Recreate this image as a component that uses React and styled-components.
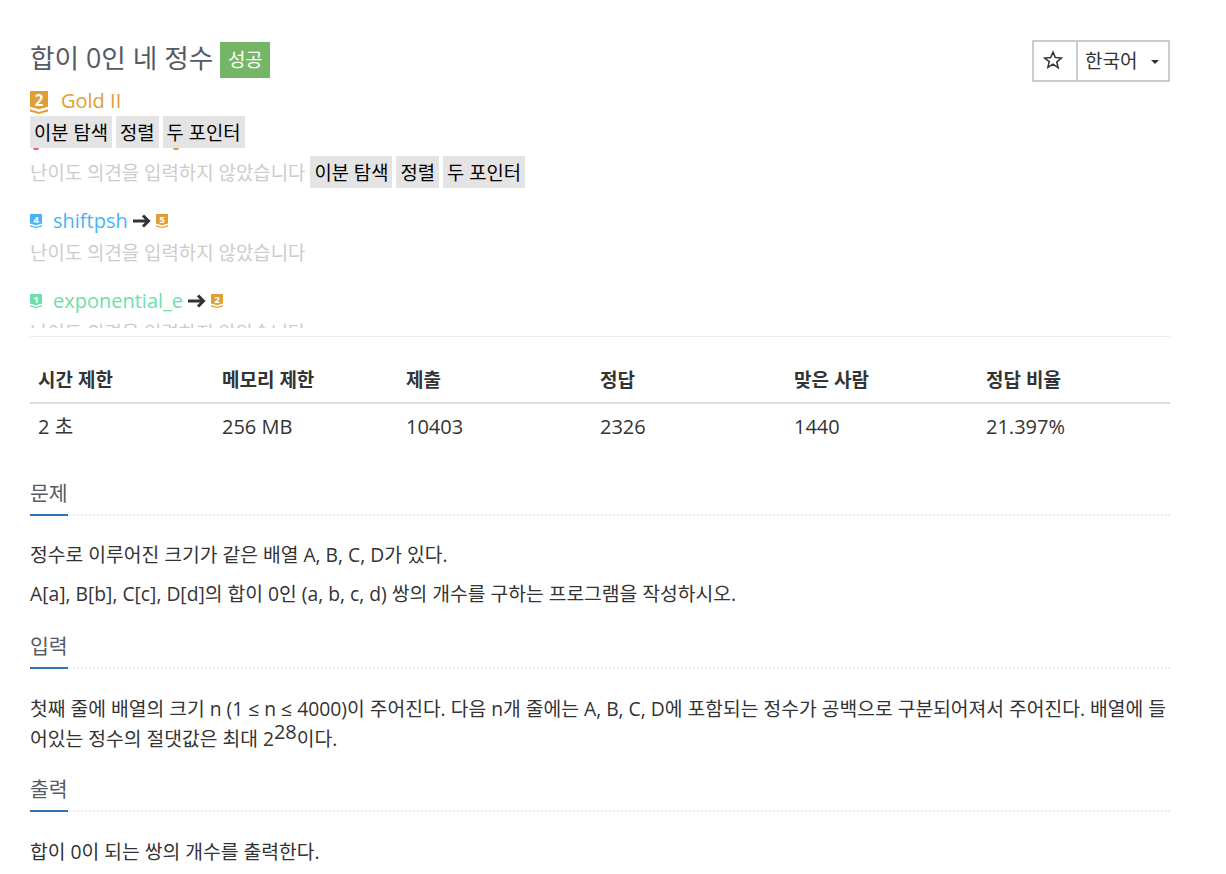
import React from 'react';
import styled, { createGlobalStyle } from 'styled-components';

const GlobalStyle = createGlobalStyle`
  html, body {
    margin: 0;
    padding: 0;
    background: #fff;
    font-family: 'Open Sans', 'Noto Sans CJK KR', sans-serif;
    color: #333;
  }
`;

const GOLD = '#e09e37';
const SKY = '#48b4f5';
const MINT = '#6ddfa8';

const Page = styled.div`
  width: 1140px;
  padding: 40px 0 0 30px;
`;

const TitleRow = styled.div`
  display: flex;
  justify-content: space-between;
  align-items: flex-start;
  height: 42px;
`;

const Title = styled.h1`
  display: flex;
  align-items: center;
  gap: 7px;
  margin: 2px 0 0;
  font-size: 26.7px;
  line-height: 36px;
  font-weight: 400;
  color: #555b66;
`;

const TitleText = styled.span`
  margin-top: -5px;
`;

const Success = styled.span`
  width: 50px;
  height: 36px;
  display: flex;
  align-items: center;
  justify-content: center;
  background: #74b566;
  color: #fff;
  font-size: 19px;
`;

const Controls = styled.div`
  display: flex;
  height: 42px;
  border: 2px solid #ccc;
  box-sizing: border-box;
`;

const StarButton = styled.div`
  width: 44px;
  display: flex;
  align-items: center;
  justify-content: center;
  padding: 0 4px 2px 0;
  border-right: 2px solid #ccc;
  box-sizing: border-box;
`;

const LangButton = styled.div`
  width: 90px;
  display: flex;
  align-items: center;
  justify-content: space-between;
  padding: 0 9px 3px 7px;
  box-sizing: border-box;
  font-size: 19px;
  color: #333;
`;

const Caret = styled.span`
  width: 0;
  height: 0;
  margin-top: 4px;
  border-left: 4px solid transparent;
  border-right: 4px solid transparent;
  border-top: 4px solid #333;
`;

const TierLine = styled.div`
  display: flex;
  align-items: center;
  height: 28px;
  margin-top: 6px;
  gap: 13px;
  font-size: 20px;
  color: ${props => props.$color};
`;

const TierName = styled.span`
  margin-top: -3px;
`;

const Tags = styled.div`
  display: inline-flex;
  gap: 4px;
`;

const Tag = styled.span`
  height: 32px;
  display: flex;
  align-items: center;
  padding: 0 4px;
  background: #e4e4e4;
  color: #000;
  font-size: 18.8px;
  white-space: nowrap;
`;

const Peek = styled.div`
  display: flex;
  height: 2px;
  overflow: hidden;
  padding-left: 3px;
  gap: 134px;
`;

const PeekDot = styled.span`
  width: 6px;
  height: 2px;
  border-radius: 0 0 3px 3px;
  background: ${props => props.$color};
`;

const Opinions = styled.div`
  height: 189px;
  border-bottom: 1px solid #eee;
  box-sizing: border-box;
`;

const OpinionsClip = styled.div`
  height: 180px;
  overflow: hidden;
`;

const Muted = styled.div`
  display: flex;
  align-items: center;
  gap: 5px;
  height: 32px;
  margin-top: ${props => props.$top}px;
  font-size: 18.9px;
  color: #ccc;
  white-space: nowrap;
`;

const Reviewer = styled.div`
  display: flex;
  align-items: center;
  height: 28px;
  margin-top: 19px;
  font-size: 20px;
  color: ${props => props.$color};
`;

const ReviewerName = styled.span`
  margin: -2px 0 0 11px;
`;

const ArrowWrap = styled.span`
  display: flex;
  margin: 0 5px;
`;

const InfoTable = styled.div`
  display: grid;
  grid-template-columns: 184px 184px 194px 194px 192px 192px;
  margin-top: 26px;
`;

const HeadCell = styled.div`
  height: 37px;
  padding: 2px 8px 0;
  border-bottom: 2px solid #ddd;
  font-size: 19px;
  font-weight: 700;
  line-height: 30px;
  color: #333;
`;

const BodyCell = styled.div`
  padding: 8px 8px 0;
  height: 44px;
  font-size: 20px;
  line-height: 30px;
  color: #333;
`;

const Section = styled.section`
  margin-top: ${props => props.$top}px;
`;

const Headline = styled.div`
  border-bottom: 2px dotted #eee;
  height: 34px;
`;

const HeadlineText = styled.h2`
  display: inline-block;
  margin: 0;
  height: 34px;
  border-bottom: 2px solid #2f74b5;
  font-size: 20.5px;
  line-height: 26px;
  font-weight: 400;
  color: #555b66;
`;

const Text = styled.p`
  margin: ${props => props.$top}px 0 0;
  font-size: 19.3px;
  line-height: 30px;
  color: #333;
`;

const Sup = styled.sup`
  font-size: 20px;
  line-height: 0;
`;

function TierBadge({ color, n, width = 12, height = 14 }) {
  return (
    <svg width={width} height={height} viewBox="0 0 18 22" preserveAspectRatio="none" style={{ flex: 'none' }}>
      <path d="M0 0H18V15L9 17.5L0 15Z" fill={color} />
      <path d="M0 17.5L9 20L18 17.5V19.5L9 22L0 19.5Z" fill={color} />
      <text x="9" y="14" textAnchor="middle" fontSize="15" fontWeight="700" fill="#fff" fontFamily="'Open Sans', sans-serif">{n}</text>
    </svg>
  );
}

function Arrow() {
  return (
    <svg width="18" height="14" viewBox="0 0 18 14">
      <path d="M0 7H15M10 1.5L15.5 7L10 12.5" stroke="#333" strokeWidth="3" fill="none" />
    </svg>
  );
}

const tagNames = ['이분 탐색', '정렬', '두 포인터'];

function TagList() {
  return (
    <Tags>
      {tagNames.map(t => <Tag key={t}>{t}</Tag>)}
    </Tags>
  );
}

const columns = [
  ['시간 제한', '2 초'],
  ['메모리 제한', '256 MB'],
  ['제출', '10403'],
  ['정답', '2326'],
  ['맞은 사람', '1440'],
  ['정답 비율', '21.397%'],
];

export default function App() {
  return (
    <Page>
      <GlobalStyle />
      <TitleRow>
        <Title><TitleText>합이 0인 네 정수</TitleText> <Success>성공</Success></Title>
        <Controls>
          <StarButton>
            <svg width="20" height="20" viewBox="0 0 24 24">
              <path d="M12 2.5l2.8 6.6 7.2.6-5.5 4.7 1.7 7L12 17l-6.2 3.9 1.7-7L2 9.7l7.2-.6z" fill="none" stroke="#333" strokeWidth="1.8" />
            </svg>
          </StarButton>
          <LangButton>한국어 <Caret /></LangButton>
        </Controls>
      </TitleRow>

      <TierLine $color={GOLD}>
        <TierBadge color={GOLD} n="2" width={18} height={23} />
        <TierName>Gold II</TierName>
      </TierLine>
      <TagList />

      <Opinions>
        <OpinionsClip>
          <Peek>
            <PeekDot $color="#f0559a" />
            <PeekDot $color={GOLD} />
          </Peek>
          <Muted $top={6}>난이도 의견을 입력하지 않았습니다 <TagList /></Muted>
          <Reviewer $color={SKY}>
            <TierBadge color={SKY} n="4" />
            <ReviewerName>shiftpsh</ReviewerName>
            <ArrowWrap><Arrow /></ArrowWrap>
            <TierBadge color={GOLD} n="5" />
          </Reviewer>
          <Muted $top={1}>난이도 의견을 입력하지 않았습니다</Muted>
          <Reviewer $color={MINT}>
            <TierBadge color={MINT} n="1" />
            <ReviewerName>exponential_e</ReviewerName>
            <ArrowWrap><Arrow /></ArrowWrap>
            <TierBadge color={GOLD} n="2" />
          </Reviewer>
          <Muted $top={1}>난이도 의견을 입력하지 않았습니다</Muted>
        </OpinionsClip>
      </Opinions>

      <InfoTable>
        {columns.map(c => <HeadCell key={c[0]}>{c[0]}</HeadCell>)}
        {columns.map(c => <BodyCell key={c[0]}>{c[1]}</BodyCell>)}
      </InfoTable>

      <Section $top={24}>
        <Headline><HeadlineText>문제</HeadlineText></Headline>
        <Text $top={24}>정수로 이루어진 크기가 같은 배열 A, B, C, D가 있다.</Text>
        <Text $top={9}>A[a], B[b], C[c], D[d]의 합이 0인 (a, b, c, d) 쌍의 개수를 구하는 프로그램을 작성하시오.</Text>
      </Section>

      <Section $top={24}>
        <Headline><HeadlineText>입력</HeadlineText></Headline>
        <Text $top={25}>첫째 줄에 배열의 크기 n (1 ≤ n ≤ 4000)이 주어진다. 다음 n개 줄에는 A, B, C, D에 포함되는 정수가 공백으로 구분되어져서 주어진다. 배열에 들어있는 정수의 절댓값은 최대 2<Sup>28</Sup>이다.</Text>
      </Section>

      <Section $top={22}>
        <Headline><HeadlineText>출력</HeadlineText></Headline>
        <Text $top={25}>합이 0이 되는 쌍의 개수를 출력한다.</Text>
      </Section>
    </Page>
  );
}
